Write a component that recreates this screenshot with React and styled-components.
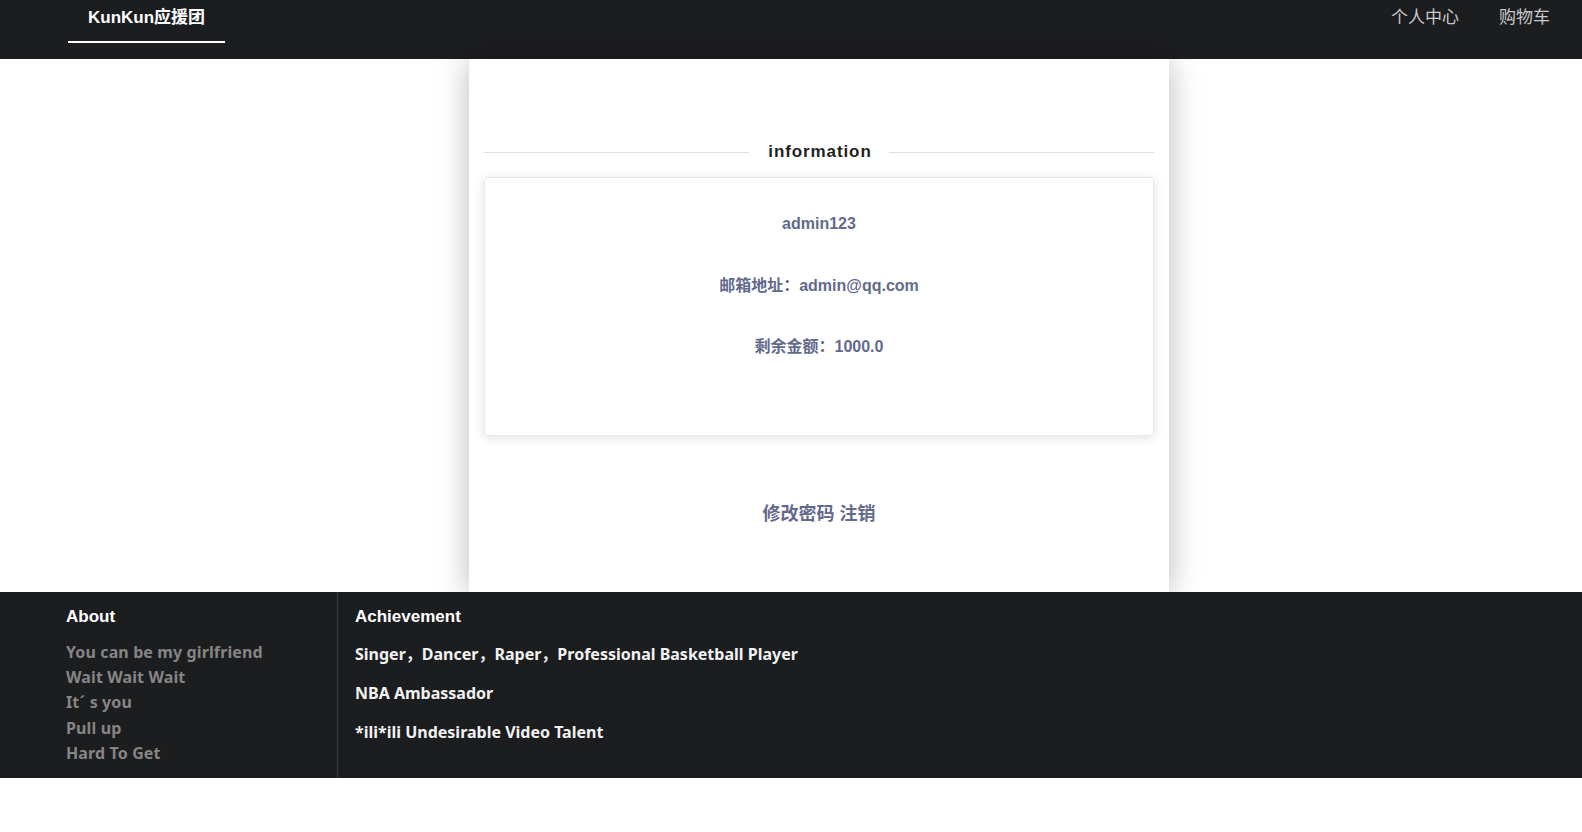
import React from "react";
import styled, { createGlobalStyle } from "styled-components";

const GlobalStyle = createGlobalStyle`
  html, body { margin: 0; padding: 0; background: #fff; }
  body { font-family: "Liberation Sans", Arial, "Noto Sans CJK SC", sans-serif; }
  * { box-sizing: border-box; }
`;

const Page = styled.div`
  width: 1582px;
  display: flex;
  flex-direction: column;
`;

const Header = styled.header`
  height: 59px;
  background: #1c1d1f;
  display: flex;
  align-items: flex-start;
  justify-content: space-between;
  padding: 0 12px 0 68px;
`;

const NavGroup = styled.nav`
  display: flex;
`;

const NavItem = styled.a`
  display: block;
  padding: 0 20px 6px;
  line-height: 35px;
  font-size: 17px;
  font-weight: ${(p) => (p.$brand ? 700 : 400)};
  color: ${(p) => (p.$brand ? "#ffffff" : "#c9c9c9")};
  border-bottom: 2px solid ${(p) => (p.$active ? "#ffffff" : "transparent")};
  font-family: "Liberation Sans", Arial, "Noto Sans CJK SC", sans-serif;
  cursor: pointer;
`;

const Main = styled.main`
  display: flex;
  padding-left: 469px;
`;

const Card = styled.section`
  width: 700px;
  background: #fff;
  box-shadow: 0 2px 30px rgba(0, 0, 0, 0.28);
  padding: 81px 15px 68px;
  display: flex;
  flex-direction: column;
`;

const DividerRow = styled.div`
  display: flex;
  align-items: center;
  height: 24px;
`;

const DividerLine = styled.span`
  flex: 1;
  height: 1px;
  background: #dcdfe6;
`;

const DividerText = styled.span`
  padding: 0 17px 0 19px;
  font-size: 17px;
  font-weight: 700;
  letter-spacing: 0.9px;
  color: #1f1f22;
`;

const InfoBox = styled.div`
  margin-top: 13px;
  border: 1px solid #e4e7ed;
  border-radius: 4px;
  box-shadow: 0 2px 12px rgba(0, 0, 0, 0.12);
  padding: 36px 20px 78px;
  display: flex;
  flex-direction: column;
  align-items: center;
  gap: 41.5px;
`;

const InfoLine = styled.div`
  line-height: 20px;
  font-size: 16px;
  font-weight: 700;
  color: #626a8c;
`;

const Actions = styled.div`
  margin-top: 64px;
  display: flex;
  justify-content: center;
  gap: 5px;
`;

const ActionLink = styled.a`
  line-height: 24px;
  font-size: 18px;
  font-weight: 700;
  color: #626a8c;
  cursor: pointer;
  font-family: "Noto Sans CJK SC", sans-serif;
`;

const Footer = styled.footer`
  height: 186px;
  background: #1c1d1f;
  display: flex;
`;

const FooterCol = styled.div`
  width: ${(p) => p.$width || "auto"};
  flex: ${(p) => (p.$grow ? 1 : "none")};
  padding: 12px 0 0 ${(p) => p.$padLeft};
  border-right: ${(p) => (p.$divider ? "1px solid #3a3b3d" : "none")};
  display: flex;
  flex-direction: column;
`;

const FooterTitle = styled.h3`
  margin: 0;
  line-height: 25px;
  font-size: 17px;
  font-weight: 700;
  color: #ffffff;
  font-family: "Liberation Sans", Arial, sans-serif;
`;

const FooterLinks = styled.ul`
  list-style: none;
  margin: 11px 0 0;
  padding: 0;
`;

const FooterLink = styled.li`
  line-height: 25.2px;
  font-size: 16px;
  font-weight: 700;
  letter-spacing: 0.12px;
  color: #858585;
  font-family: "Noto Sans", "Noto Sans CJK SC", sans-serif;
`;

const AchieveList = styled.div`
  margin-top: 13px;
  display: flex;
  flex-direction: column;
  gap: 15px;
`;

const AchieveItem = styled.div`
  line-height: 24px;
  font-size: 16px;
  font-weight: 700;
  color: #f2f2f2;
  font-family: "Noto Sans", "Noto Sans CJK SC", sans-serif;
`;

export default function App() {
  const links = [
    "You can be my girlfriend",
    "Wait Wait Wait",
    "It\u00b4 s you",
    "Pull up",
    "Hard To Get",
  ];
  const achievements = [
    "Singer，Dancer，Raper，Professional Basketball Player",
    "NBA Ambassador",
    "*ili*ili Undesirable Video Talent",
  ];
  return (
    <Page>
      <GlobalStyle />
      <Header>
        <NavGroup>
          <NavItem $brand $active>KunKun应援团</NavItem>
        </NavGroup>
        <NavGroup>
          <NavItem>个人中心</NavItem>
          <NavItem>购物车</NavItem>
        </NavGroup>
      </Header>
      <Main>
        <Card>
          <DividerRow>
            <DividerLine />
            <DividerText>information</DividerText>
            <DividerLine />
          </DividerRow>
          <InfoBox>
            <InfoLine>admin123</InfoLine>
            <InfoLine>邮箱地址：admin@qq.com</InfoLine>
            <InfoLine>剩余金额：1000.0</InfoLine>
          </InfoBox>
          <Actions>
            <ActionLink>修改密码</ActionLink>
            <ActionLink>注销</ActionLink>
          </Actions>
        </Card>
      </Main>
      <Footer>
        <FooterCol $width="338px" $padLeft="66px" $divider>
          <FooterTitle>About</FooterTitle>
          <FooterLinks>
            {links.map((l) => (
              <FooterLink key={l}>{l}</FooterLink>
            ))}
          </FooterLinks>
        </FooterCol>
        <FooterCol $grow $padLeft="17px">
          <FooterTitle>Achievement</FooterTitle>
          <AchieveList>
            {achievements.map((a) => (
              <AchieveItem key={a}>{a}</AchieveItem>
            ))}
          </AchieveList>
        </FooterCol>
      </Footer>
    </Page>
  );
}
